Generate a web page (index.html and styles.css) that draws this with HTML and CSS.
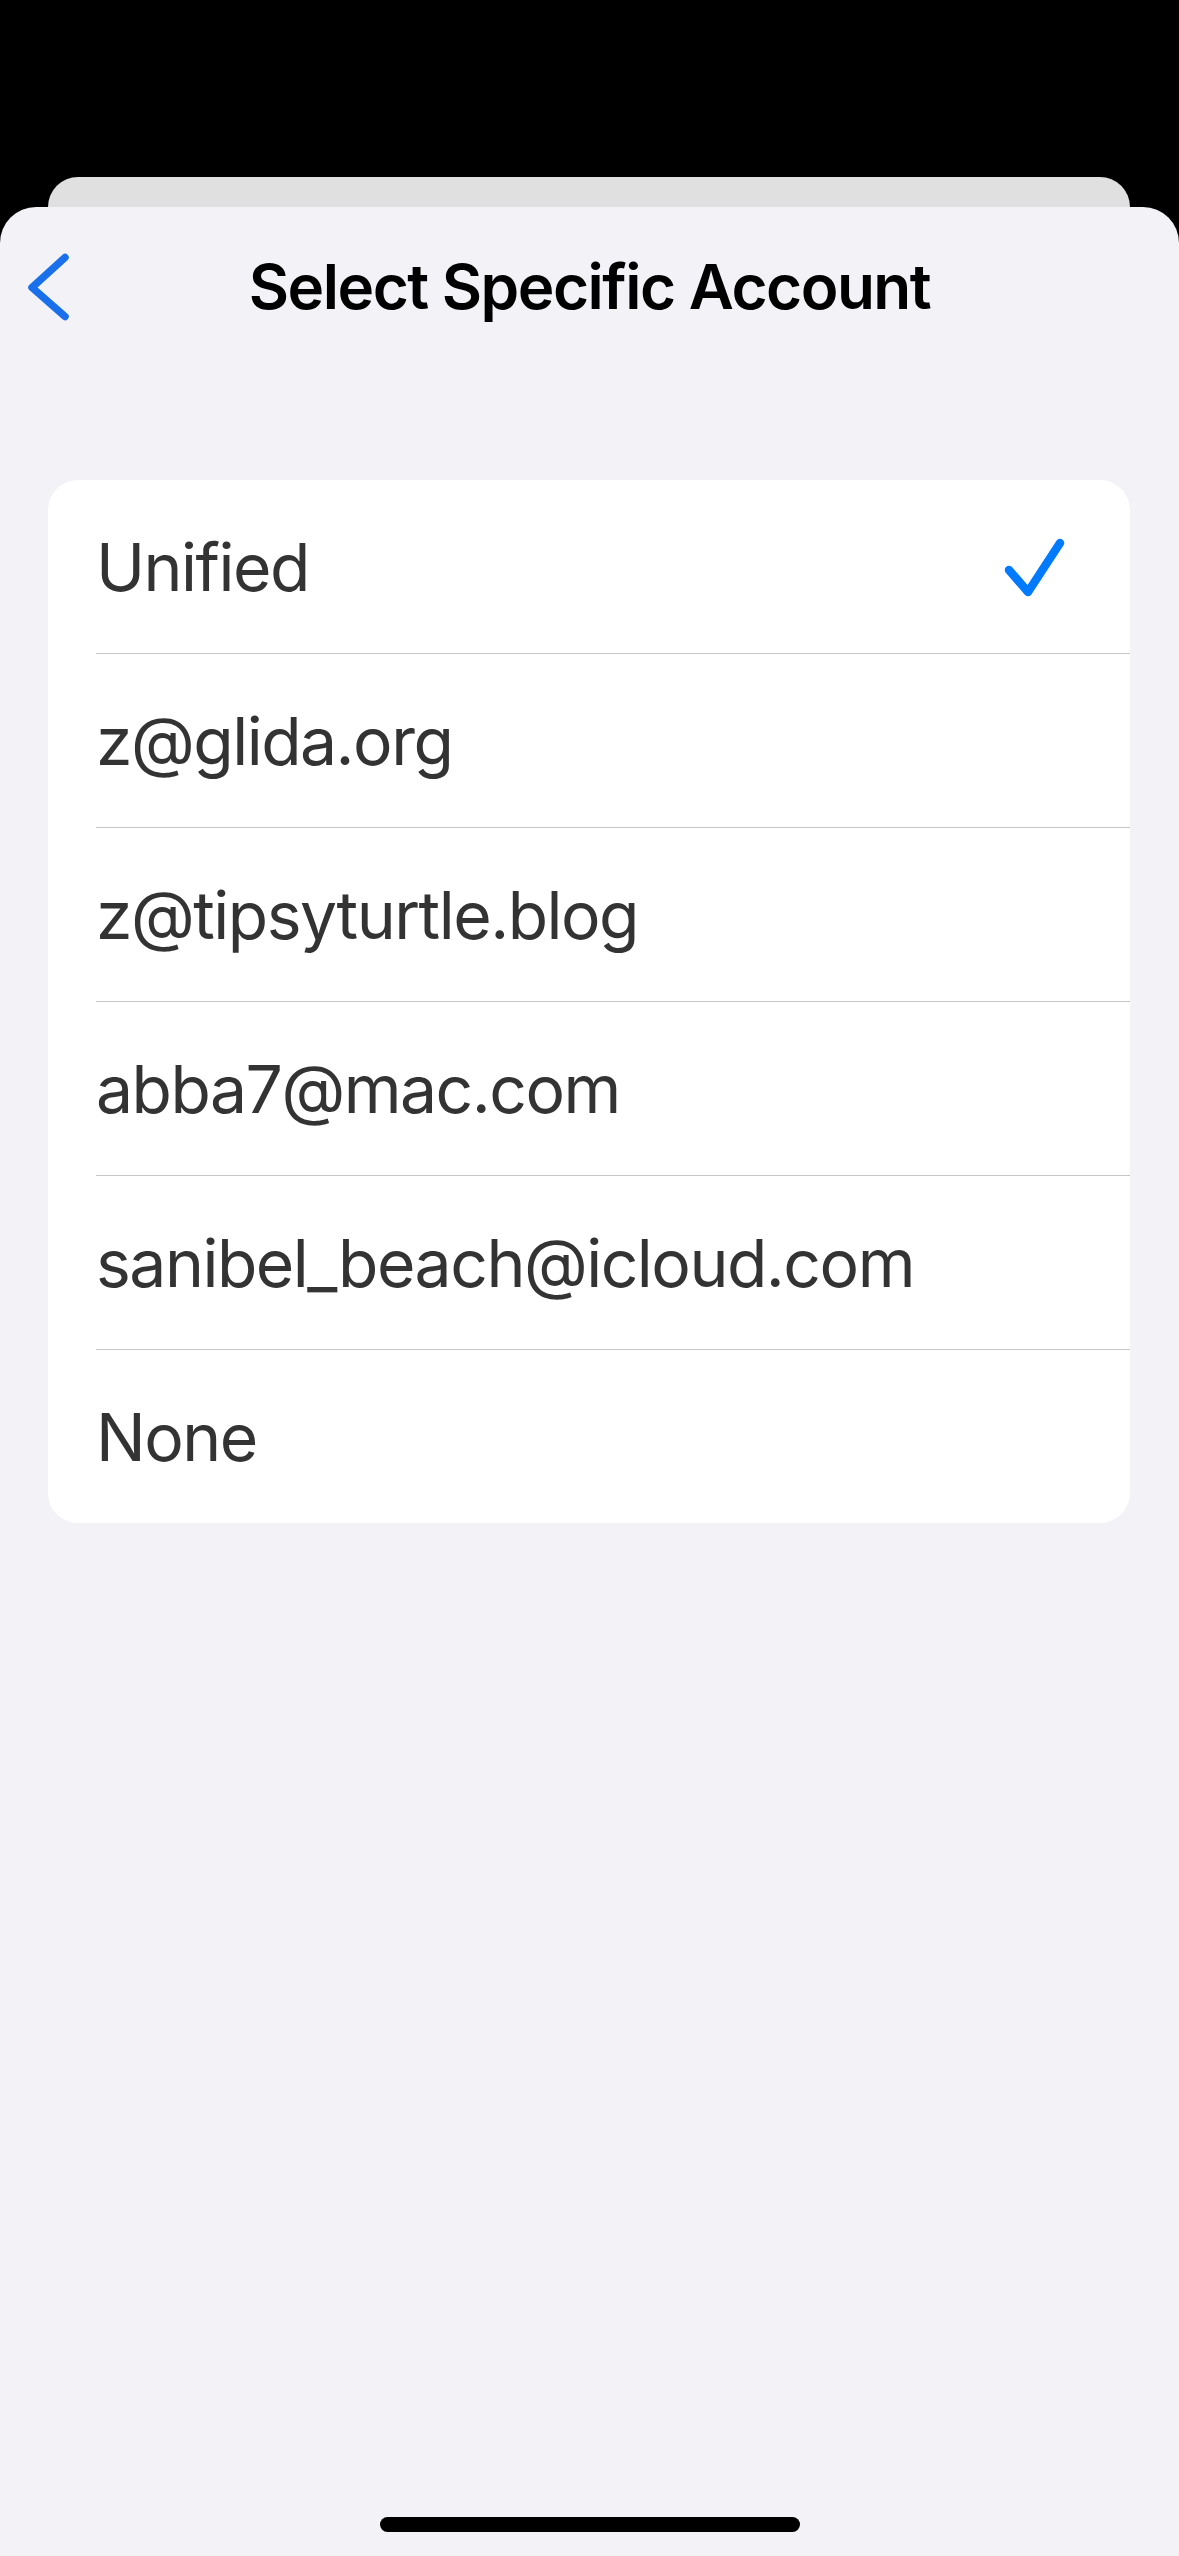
FILE: index.html
```html
<!DOCTYPE html>
<html lang="en">
<head>
    <meta charset="UTF-8">
    <meta name="viewport" content="width=device-width, initial-scale=1.0">
    <title>Select Specific Account</title>
    <link rel="stylesheet" href="styles.css">
</head>
<body>
    <div class="screen">
        <div class="back-card"></div>

        <div class="sheet">
            <header class="nav">
                <button class="back" aria-label="Back">
                    <svg width="46" height="76" viewBox="0 0 46 76">
                        <polyline points="39,8.5 6,38.5 39,67.5" fill="none" stroke="#1a70ea" stroke-width="7.5" stroke-linecap="round" stroke-linejoin="round"/>
                    </svg>
                </button>
                <h1>Select Specific Account</h1>
                <span></span>
            </header>

            <ul class="list">
                <li class="row">
                    <div class="row-inner">
                        <span class="label">Unified</span>
                        <svg class="check" width="70" height="70" viewBox="0 0 70 70">
                            <polyline points="9,38 28,60 60,11" fill="none" stroke="#007aff" stroke-width="8.5" stroke-linecap="round" stroke-linejoin="round"/>
                        </svg>
                    </div>
                </li>
                <li class="row"><div class="row-inner"><span class="label">z@glida.org</span></div></li>
                <li class="row"><div class="row-inner"><span class="label">z@tipsyturtle.blog</span></div></li>
                <li class="row"><div class="row-inner"><span class="label">abba7@mac.com</span></div></li>
                <li class="row"><div class="row-inner"><span class="label">sanibel_beach@icloud.com</span></div></li>
                <li class="row"><div class="row-inner"><span class="label">None</span></div></li>
            </ul>

            <div class="home-indicator"></div>
        </div>
    </div>
</body>
</html>
```

FILE: styles.css
```css
body {
    margin: 0;
    background: #000;
    font-family: Inter, "Noto Sans", Arial, sans-serif;
}

.screen {
    height: 2556px;
    padding-top: 177px;
    box-sizing: border-box;
    display: flex;
    flex-direction: column;
    overflow: hidden;
}

.back-card {
    height: 30px;
    margin: 0 49px 0 48px;
    background: #e0e0e0;
    border-radius: 30px 30px 0 0;
}

.sheet {
    flex: 1;
    background: #f2f2f7;
    border-radius: 36px 36px 0 0;
    display: flex;
    flex-direction: column;
}

.nav {
    height: 159px;
    display: grid;
    grid-template-columns: 1fr auto 1fr;
    align-items: center;
    padding-left: 26px;
    padding-right: 26px;
}

.back {
    justify-self: start;
    background: none;
    border: none;
    padding: 0;
    display: flex;
    cursor: pointer;
}

.nav h1 {
    margin: 0;
    font-size: 62px;
    font-weight: 600;
    color: #000;
    letter-spacing: -1.5px;
}

.list {
    list-style: none;
    margin: 114px 49px 0 48px;
    padding: 0;
    background: #fff;
    border-radius: 30px;
    overflow: hidden;
}

.row {
    padding-left: 48px;
}

.row-inner {
    height: 173px;
    display: flex;
    align-items: center;
    justify-content: space-between;
    padding-right: 60px;
}

.row + .row .row-inner {
    border-top: 1px solid #c6c6c8;
}

.label {
    font-size: 66px;
    color: #333;
    letter-spacing: -1.5px;
}

.check {
    display: block;
}

.home-indicator {
    width: 420px;
    height: 15px;
    margin: auto auto 24px;
    background: #000;
    border-radius: 8px;
}
```
